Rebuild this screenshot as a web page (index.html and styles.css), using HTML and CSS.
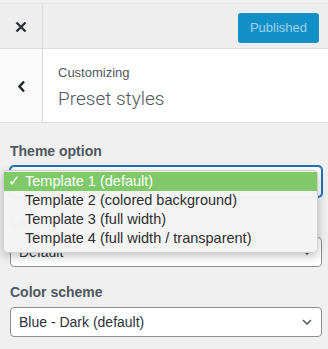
FILE: index.html
```html
<!DOCTYPE html>
<html lang="en">
<head>
  <meta charset="UTF-8">
  <title>Customizing - Preset styles</title>
  <link rel="stylesheet" href="styles.css">
</head>
<body>

<!-- top bar -->
<div class="top-bar">
  <div class="close-btn">
    <svg width="12" height="12" viewBox="0 0 12 12">
      <path d="M1.5 1.5 L10.5 10.5 M10.5 1.5 L1.5 10.5" stroke="#2c3338" stroke-width="2.4" fill="none"/>
    </svg>
  </div>
  <button class="publish-btn">Published</button>
</div>

<!-- section title -->
<div class="section-title">
  <div class="back-btn">
    <svg width="9" height="13" viewBox="0 0 9 13">
      <path d="M7 1.5 L2.5 6.5 L7 11.5" stroke="#1d2327" stroke-width="2.4" fill="none"/>
    </svg>
  </div>
  <div class="title-text">
    <div class="crumb">Customizing</div>
    <div class="heading">Preset styles</div>
  </div>
</div>

<!-- controls -->
<div class="panel">
  <div class="control theme-control">
    <div class="control-label">Theme option</div>
    <div class="select focused">
      <span>Template 1 (default)</span>
    </div>
    <ul class="dropdown">
      <li class="active"><span class="check">✓</span>Template 1 (default)</li>
      <li><span class="check"></span>Template 2 (colored background)</li>
      <li><span class="check"></span>Template 3 (full width)</li>
      <li><span class="check"></span>Template 4 (full width / transparent)</li>
    </ul>
  </div>

  <div class="control">
    <div class="control-label">Layout</div>
    <div class="select">
      <span>Default</span>
      <svg class="chevron" width="10" height="6" viewBox="0 0 10 6">
        <path d="M1 1 L5 5 L9 1" stroke="#50575e" stroke-width="1.5" fill="none"/>
      </svg>
    </div>
  </div>

  <div class="control">
    <div class="control-label">Color scheme</div>
    <div class="select">
      <span>Blue - Dark (default)</span>
      <svg class="chevron" width="10" height="6" viewBox="0 0 10 6">
        <path d="M1 1 L5 5 L9 1" stroke="#50575e" stroke-width="1.5" fill="none"/>
      </svg>
    </div>
  </div>
</div>

</body>
</html>
```

FILE: styles.css
```css
body {
  margin: 0;
  background-color: #f0f0f1;
  font-family: "Liberation Sans", Arial, sans-serif;
  color: #2c3338;
}
.top-bar {
  display: flex;
  align-items: center;
  height: 44px;
  margin-top: 3px;
  border-top: 1px solid #e4e4e4;
  border-bottom: 1px solid #dcdcde;
  background-color: #eeeeee;
}
.close-btn {
  width: 43px;
  height: 100%;
  display: flex;
  align-items: center;
  justify-content: center;
  border-right: 1px solid #dcdcde;
  padding-top: 2px;
  box-sizing: border-box;
}
.publish-btn {
  margin-left: auto;
  margin-right: 9px;
  margin-top: 3px;
  width: 81px;
  height: 30px;
  border: none;
  border-radius: 3px;
  background-color: #1190c8;
  color: #9fd0ea;
  font-family: "Liberation Sans", Arial, sans-serif;
  font-size: 13px;
  padding: 0;
}
.section-title {
  display: flex;
  height: 73px;
  background-color: #ffffff;
  border-bottom: 1px solid #dcdcde;
}
.back-btn {
  width: 43px;
  display: flex;
  align-items: center;
  justify-content: center;
  border-right: 1px solid #dcdcde;
  background-color: #fafafa;
  padding-top: 2px;
  box-sizing: border-box;
}
.title-text {
  padding: 16px 0 0 15px;
  color: #50575e;
}
.crumb {
  font-size: 13px;
  line-height: 16px;
}
.heading {
  font-family: Roboto, "Liberation Sans", sans-serif;
  font-weight: 300;
  font-size: 19px;
  line-height: 26px;
  margin-top: 5px;
}
.panel {
  padding: 19px 6px 0 10px;
}
.control {
  margin-bottom: 16px;
}
.theme-control {
  position: relative;
}
.control-label {
  font-size: 14px;
  line-height: 18px;
  font-weight: bold;
  color: #50575e;
  margin-bottom: 6px;
}
.select {
  display: flex;
  align-items: center;
  justify-content: space-between;
  height: 30px;
  box-sizing: border-box;
  padding: 0 9px 0 8px;
  border: 1px solid #8c8f94;
  border-radius: 4px;
  background-color: #ffffff;
  font-size: 14px;
  color: #2c3338;
}
.select.focused {
  height: 31px;
  border-color: #2271b1;
  box-shadow: 0 0 0 1px #2271b1;
}
.dropdown {
  position: absolute;
  left: -7px;
  top: 28px;
  width: 315px;
  margin: 0;
  padding: 1px 0 4px 0;
  list-style: none;
  box-sizing: border-box;
  background-color: rgba(244, 244, 244, 0.98);
  border: 1px solid rgba(0, 0, 0, 0.15);
  border-radius: 5px;
  box-shadow: 0 3px 10px rgba(0, 0, 0, 0.25);
  font-size: 14.5px;
  color: #2f2f2f;
}
.dropdown li {
  height: 19px;
  line-height: 19px;
  padding-left: 4px;
  white-space: nowrap;
}
.dropdown li.active {
  background-color: #80c96a;
  color: #ffffff;
}
.check {
  display: inline-block;
  width: 17px;
}
```
